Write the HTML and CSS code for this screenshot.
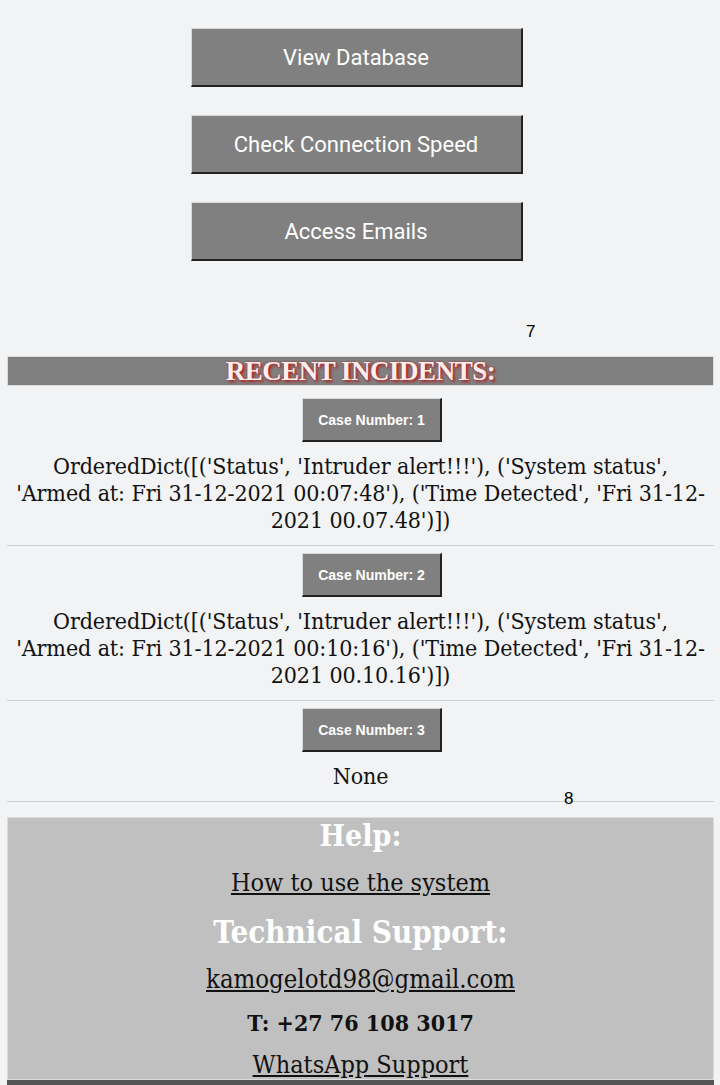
FILE: index.html
```html
<!DOCTYPE html>
<html>
<head>
<meta charset="utf-8">
<link rel="stylesheet" href="styles.css">
</head>
<body>
<div class="actions">
  <button class="btn">View Database</button>
  <button class="btn">Check Connection Speed</button>
  <button class="btn">Access Emails</button>
</div>
<div class="count count-top">7</div>
<div class="bar"><h2 class="bar-title">RECENT INCIDENTS:</h2></div>
<div class="incident first">
  <button class="case">Case Number: 1</button>
  <p class="detail">OrderedDict([('Status', 'Intruder alert!!!'), ('System status', 'Armed at: Fri 31-12-2021 00:07:48'), ('Time Detected', 'Fri 31-12-2021 00.07.48')])</p>
</div>
<hr class="sep">
<div class="incident">
  <button class="case">Case Number: 2</button>
  <p class="detail">OrderedDict([('Status', 'Intruder alert!!!'), ('System status', 'Armed at: Fri 31-12-2021 00:10:16'), ('Time Detected', 'Fri 31-12-2021 00.10.16')])</p>
</div>
<hr class="sep">
<div class="incident">
  <button class="case">Case Number: 3</button>
  <p class="detail">None</p>
</div>
<hr class="sep">
<div class="count count-bottom">8</div>
<div class="help">
  <h2 class="help-title">Help:</h2>
  <a class="help-link link-how" href="#">How to use the system</a>
  <h2 class="help-title title-tech">Technical Support:</h2>
  <a class="help-link link-mail" href="#">kamogelotd98@gmail.com</a>
  <div class="phone">T: +27 76 108 3017</div>
  <a class="help-link link-wa" href="#">WhatsApp Support</a>
</div>
<div class="footer"></div>
</body>
</html>
```
FILE: styles.css
```css
html, body {
  margin: 0;
  padding: 0;
  background: #f2f3f5;
}
body {
  padding: 0 6px 0 7px;
  font-family: "DejaVu Serif Condensed", "DejaVu Serif", serif;
  font-stretch: condensed;
  color: #111;
  overflow: hidden;
  height: 1085px;
  box-sizing: border-box;
}
.actions {
  display: flex;
  flex-direction: column;
  align-items: center;
  gap: 28px;
  padding-top: 28px;
}
.btn {
  width: 332px;
  height: 59px;
  margin-left: -8px;
  background: #808080;
  color: #fff;
  font-family: Roboto, sans-serif;
  font-size: 22px;
  border-style: solid;
  border-width: 1px 2px 2px 1px;
  border-color: #d8d8d8 #222 #222 #d8d8d8;
  padding: 0;
}
.count {
  font-family: "Liberation Sans", sans-serif;
  font-stretch: normal;
  font-size: 17px;
  line-height: 18px;
  color: #000;
}
.count-top {
  padding-left: 519px;
  margin-top: 62px;
  height: 33px;
}
.count-bottom {
  padding-left: 557px;
  margin-top: -12px;
  height: 27px;
}
.bar {
  background: #808080;
  border: 1px solid #dcdcdc;
  height: 28px;
  display: flex;
  align-items: center;
  justify-content: center;
}
.bar-title {
  margin: 0;
  font-family: "Liberation Serif", serif;
  font-weight: bold;
  font-size: 27px;
  letter-spacing: -0.5px;
  color: #fdeeee;
  text-shadow: 2px 2px 3px #b22222, 0 0 2px #b22222;
}
.incident {
  display: flex;
  flex-direction: column;
  align-items: center;
  padding-top: 7px;
}
.incident.first {
  padding-top: 12px;
}
.case {
  width: 140px;
  height: 44px;
  margin-left: 23px;
  background: #808080;
  color: #fff;
  font-family: "Liberation Sans Narrow", "Liberation Sans", sans-serif;
  font-weight: bold;
  font-size: 14px;
  border-style: solid;
  border-width: 1px 2px 2px 1px;
  border-color: #d8d8d8 #222 #222 #d8d8d8;
  padding: 0;
}
.detail {
  margin: 11px 0 0;
  font-size: 23px;
  line-height: 27px;
  letter-spacing: -0.1px;
  text-align: center;
  padding: 0 8px;
}
.sep {
  margin: 11px 0 0;
  border: 0;
  border-top: 1px solid #d0d0d0;
  height: 0;
}
.help {
  background: #c0c0c0;
  border: 1px solid #dcdcdc;
  height: 261px;
  overflow: hidden;
  display: flex;
  flex-direction: column;
  align-items: center;
  text-align: center;
}
.help-title {
  margin: 0;
  font-size: 30px;
  font-weight: bold;
  color: #fff;
  line-height: 36px;
}
.title-tech {
  font-size: 31px;
  margin-top: 16px;
}
.help-link {
  color: #111;
  font-size: 25px;
  line-height: 30px;
}
.link-how {
  margin-top: 14px;
}
.link-mail {
  font-size: 25.5px;
  margin-top: 14px;
}
.phone {
  font-size: 23px;
  font-weight: bold;
  line-height: 30px;
  margin-top: 14px;
}
.link-wa {
  margin-top: 12px;
}
.footer {
  height: 5px;
  background: #555;
}
```
